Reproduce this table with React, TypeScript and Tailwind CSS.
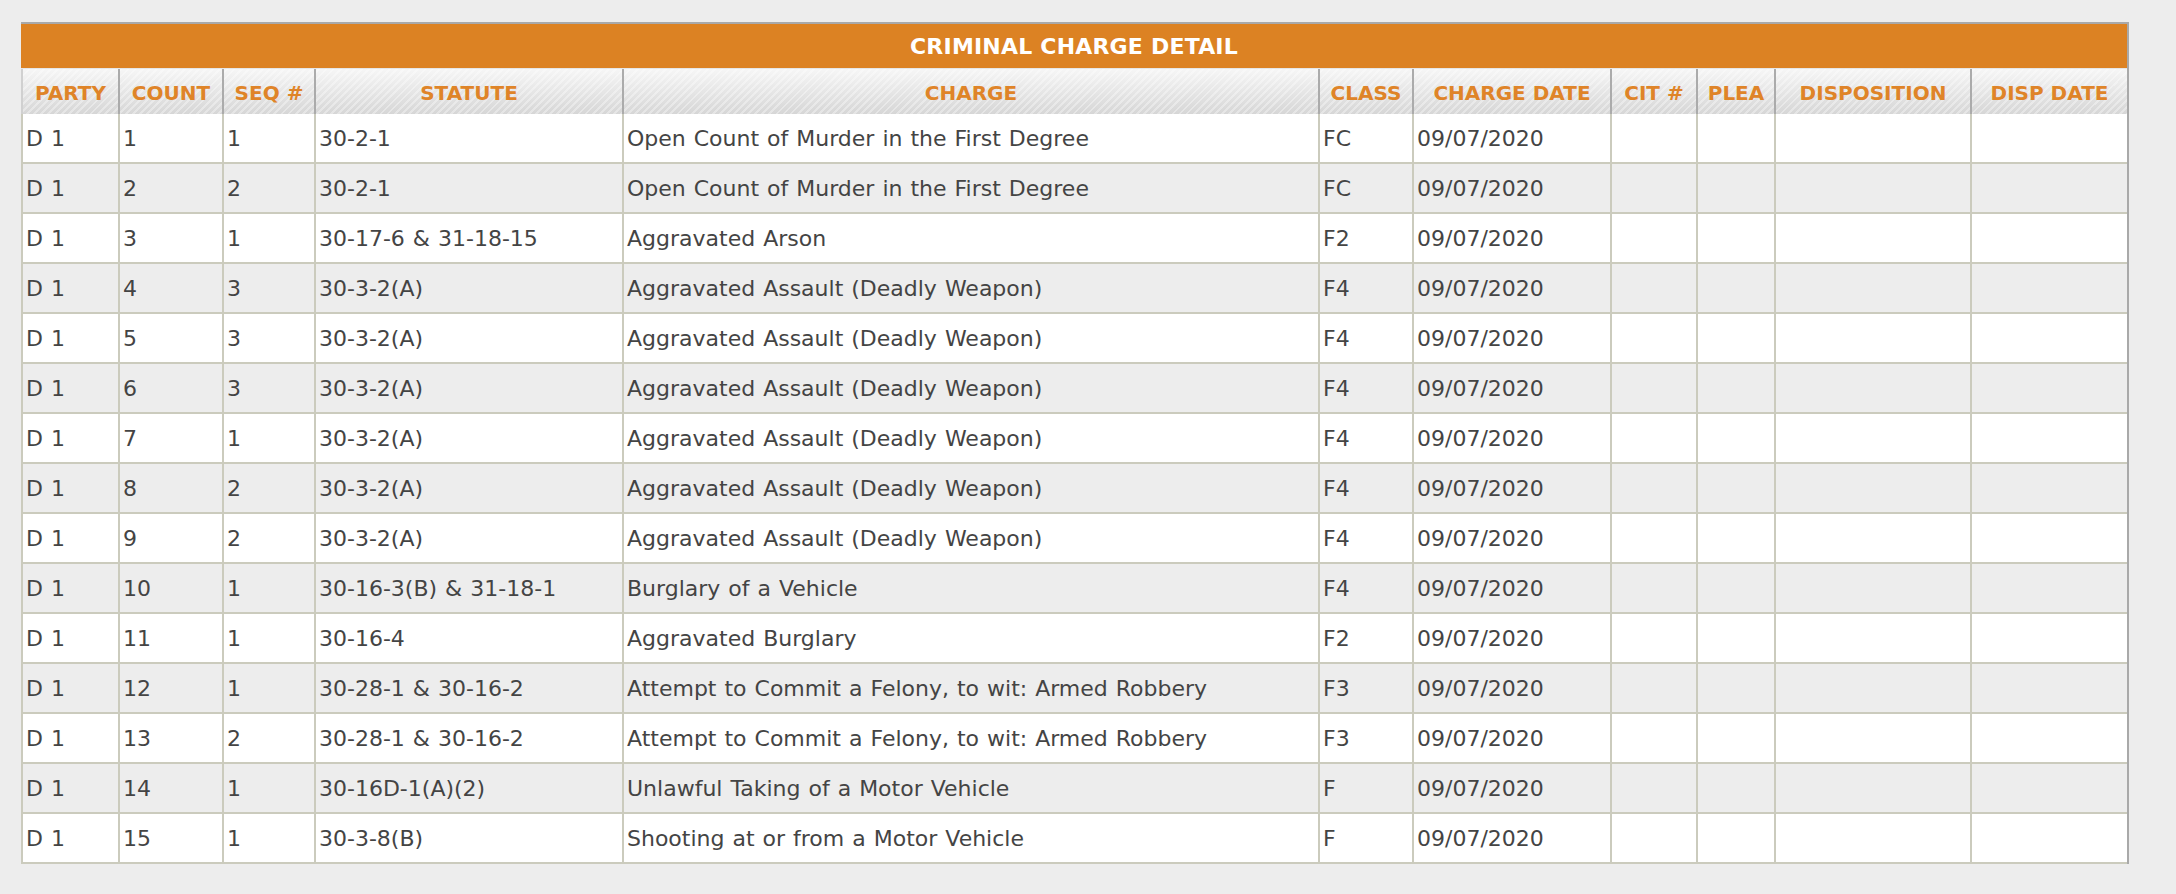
import React from "react";

type Row = [string, string, string, string, string, string, string];

const rows: Row[] = [
  ["D 1", "1", "1", "30-2-1", "Open Count of Murder in the First Degree", "FC", "09/07/2020"],
  ["D 1", "2", "2", "30-2-1", "Open Count of Murder in the First Degree", "FC", "09/07/2020"],
  ["D 1", "3", "1", "30-17-6 & 31-18-15", "Aggravated Arson", "F2", "09/07/2020"],
  ["D 1", "4", "3", "30-3-2(A)", "Aggravated Assault (Deadly Weapon)", "F4", "09/07/2020"],
  ["D 1", "5", "3", "30-3-2(A)", "Aggravated Assault (Deadly Weapon)", "F4", "09/07/2020"],
  ["D 1", "6", "3", "30-3-2(A)", "Aggravated Assault (Deadly Weapon)", "F4", "09/07/2020"],
  ["D 1", "7", "1", "30-3-2(A)", "Aggravated Assault (Deadly Weapon)", "F4", "09/07/2020"],
  ["D 1", "8", "2", "30-3-2(A)", "Aggravated Assault (Deadly Weapon)", "F4", "09/07/2020"],
  ["D 1", "9", "2", "30-3-2(A)", "Aggravated Assault (Deadly Weapon)", "F4", "09/07/2020"],
  ["D 1", "10", "1", "30-16-3(B) & 31-18-1", "Burglary of a Vehicle", "F4", "09/07/2020"],
  ["D 1", "11", "1", "30-16-4", "Aggravated Burglary", "F2", "09/07/2020"],
  ["D 1", "12", "1", "30-28-1 & 30-16-2", "Attempt to Commit a Felony, to wit: Armed Robbery", "F3", "09/07/2020"],
  ["D 1", "13", "2", "30-28-1 & 30-16-2", "Attempt to Commit a Felony, to wit: Armed Robbery", "F3", "09/07/2020"],
  ["D 1", "14", "1", "30-16D-1(A)(2)", "Unlawful Taking of a Motor Vehicle", "F", "09/07/2020"],
  ["D 1", "15", "1", "30-3-8(B)", "Shooting at or from a Motor Vehicle", "F", "09/07/2020"],
];

const headers = [
  "PARTY",
  "COUNT",
  "SEQ #",
  "STATUTE",
  "CHARGE",
  "CLASS",
  "CHARGE DATE",
  "CIT #",
  "PLEA",
  "DISPOSITION",
  "DISP DATE",
];

const gridCols =
  "grid grid-cols-[99px_104px_92px_308px_696px_94px_198px_86px_78px_196px_155px]";

export default function App() {
  return (
    <div
      className="min-h-[894px] w-full bg-[#ededed] pl-[21px] pt-[22px]"
      style={{ fontFamily: '"DejaVu Sans", Verdana, sans-serif' }}
    >
      <div className="w-[2108px] border-t-2 border-r-2 border-[#a9a9a9]">
        {/* Title band */}
        <div className="flex h-[44px] items-center justify-center bg-[#dc8223] text-[22px] font-bold tracking-[0.2px] text-white">
          CRIMINAL CHARGE DETAIL
        </div>
        {/* Header row */}
        <div
          className={`${gridCols} h-[46px] border-t border-[#e6e6e6] [background-image:repeating-linear-gradient(135deg,rgba(255,255,255,0.35)_0px,rgba(255,255,255,0.35)_2px,transparent_2px,transparent_5px),linear-gradient(to_bottom,#f6f6f6,#d6d6d6)]`}
        >
          {headers.map((h, i) => (
            <div
              key={h}
              className={`flex items-center justify-center whitespace-nowrap pt-[3px] text-[20px] font-bold text-[#df8428] ${
                i === 0 ? "border-l-2 border-l-[#d0d0d0]" : ""
              } ${i < headers.length - 1 ? "border-r-2 border-r-[#ababab]" : ""}`}
            >
              {h}
            </div>
          ))}
        </div>
        {/* Body rows */}
        {rows.map((r, ri) => (
          <div
            key={ri}
            className={`${gridCols} h-[50px] ${ri % 2 === 0 ? "bg-white" : "bg-[#ededed]"}`}
          >
            {[...r, "", "", "", ""].map((c, ci) => (
              <div
                key={ci}
                className={`flex items-center whitespace-nowrap border-b-2 border-[#cbcbbd] pl-[3px] text-[22px] text-[#444444] [word-spacing:1px] ${
                  ci === 0 ? "border-l-2" : ""
                } ${ci < 10 ? "border-r-2" : ""}`}
              >
                {c}
              </div>
            ))}
          </div>
        ))}
      </div>
    </div>
  );
}
